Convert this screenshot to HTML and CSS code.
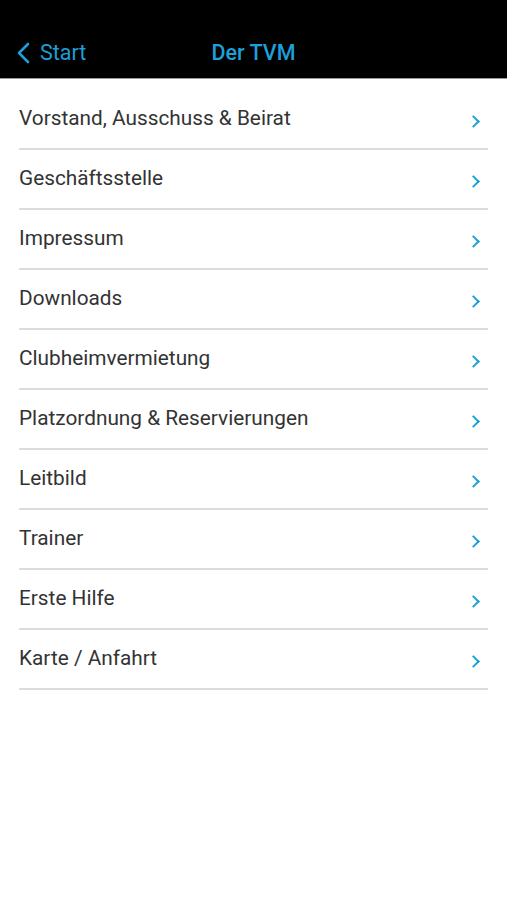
FILE: index.html
```html
<!DOCTYPE html>
<html lang="de">
    <head>
        <meta charset="UTF-8">
        <meta name="viewport" content="width=device-width, initial-scale=1.0">
        <title>Der TVM</title>
        <link rel="stylesheet" href="styles.css">
    </head>
    <body>
        <header class="navbar">
            <a class="back" href="#">
                <svg class="back-icon" width="14" height="22" viewBox="0 0 14 22">
                    <path d="M12 2 L3 11 L12 20" fill="none" stroke="#1d9fd8" stroke-width="2.6" stroke-linecap="round" stroke-linejoin="round"/>
                </svg>
                <span>Start</span>
            </a>
            <h1 class="title">Der TVM</h1>
        </header>
        <main>
            <ul class="menu">
                <li><a href="#">Vorstand, Ausschuss &amp; Beirat</a></li>
                <li><a href="#">Geschäftsstelle</a></li>
                <li><a href="#">Impressum</a></li>
                <li><a href="#">Downloads</a></li>
                <li><a href="#">Clubheimvermietung</a></li>
                <li><a href="#">Platzordnung &amp; Reservierungen</a></li>
                <li><a href="#">Leitbild</a></li>
                <li><a href="#">Trainer</a></li>
                <li><a href="#">Erste Hilfe</a></li>
                <li><a href="#">Karte / Anfahrt</a></li>
            </ul>
        </main>
    </body>
</html>
```
FILE: styles.css
```css
body {
    font-family: Roboto, "Noto Sans", sans-serif;
    margin: 0;
    background-color: white;
    color: #333;
}
.navbar {
    position: relative;
    height: 79px;
    background-color: black;
    border-bottom: 1px solid #9a9a9a;
    display: flex;
    align-items: center;
    justify-content: center;
    box-sizing: border-box;
}
.back {
    position: absolute;
    left: 16px;
    top: 40px;
    display: flex;
    align-items: center;
    gap: 10px;
    color: #1d9fd8;
    text-decoration: none;
    font-size: 21.5px;
}
.back-icon {
    display: block;
}
.title {
    margin: 0;
    margin-top: 26px;
    font-size: 21.5px;
    font-weight: 500;
    color: #1d9fd8;
}
main {
    padding: 11px 19px 0;
}
.menu {
    list-style: none;
    margin: 0;
    padding: 0;
}
.menu li {
    border-bottom: 2px solid #dcdcdc;
}
.menu li a {
    height: 58px;
    padding-bottom: 2px;
    box-sizing: border-box;
    display: flex;
    align-items: center;
    justify-content: space-between;
    color: #333;
    text-decoration: none;
    font-size: 20.8px;
}
.menu li a::after {
    content: "";
    width: 7px;
    height: 7px;
    border-right: 2.5px solid #1d9fd8;
    border-top: 2.5px solid #1d9fd8;
    transform: rotate(45deg);
    margin-right: 10px;
    margin-top: 6px;
}
```
